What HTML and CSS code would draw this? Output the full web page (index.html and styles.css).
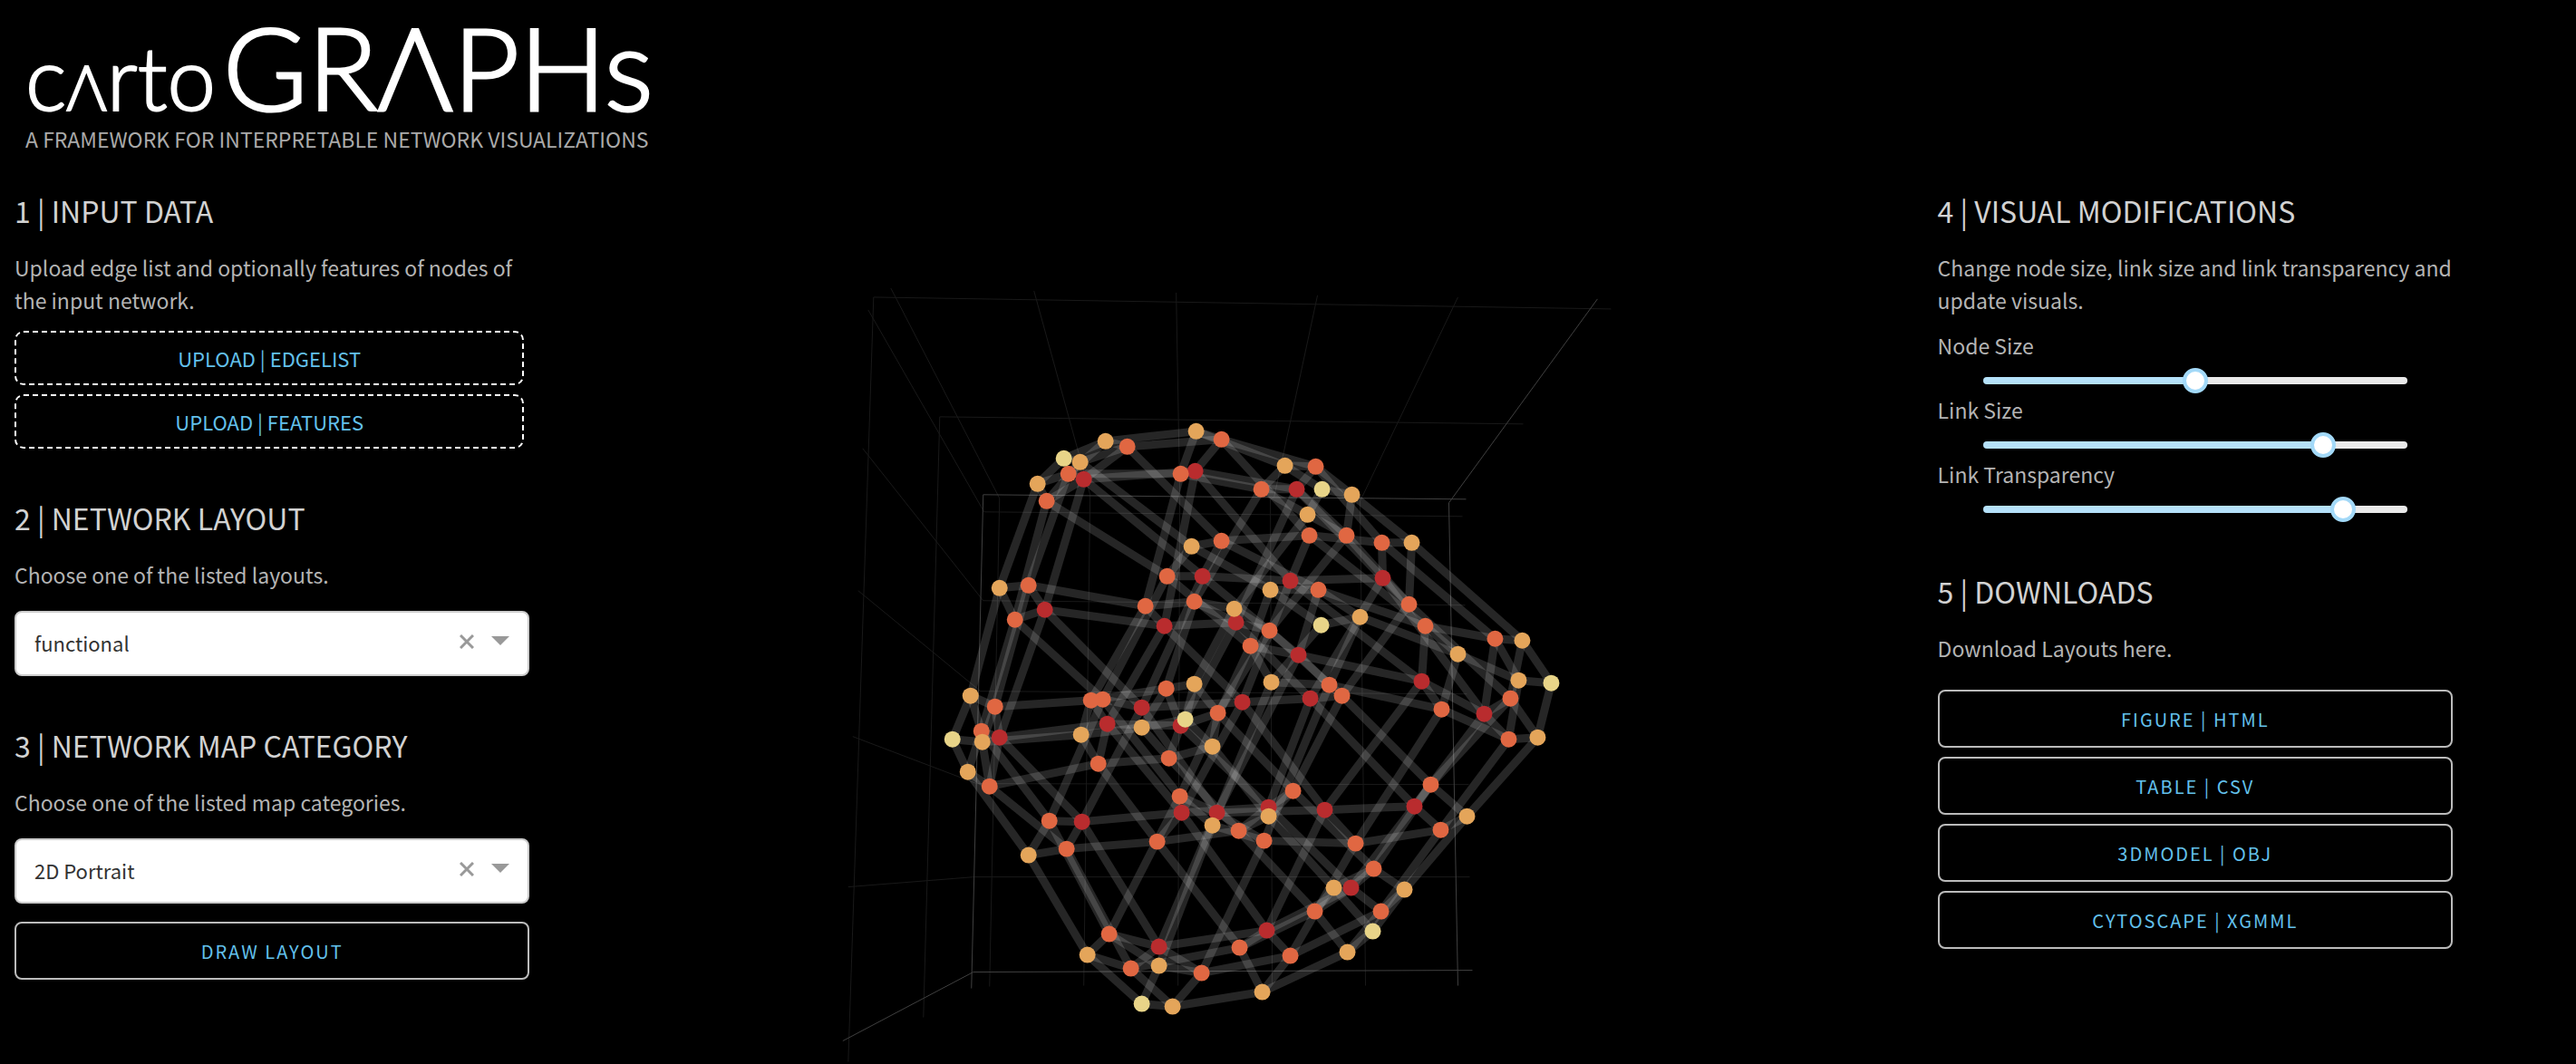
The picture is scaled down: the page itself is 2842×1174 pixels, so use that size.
FILE: index.html
```html
<!DOCTYPE html>
<html lang="en">
<head>
<meta charset="utf-8">
<title>cartoGRAPHs</title>
<link rel="stylesheet" href="styles.css">
</head>
<body>
<header class="masthead">
  <h1 class="logo"><span class="logo-small">c<span class="logo-peak">Λ</span>rto</span><span class="logo-big">GRΛPHs</span></h1>
  <p class="tagline">A FRAMEWORK FOR INTERPRETABLE NETWORK VISUALIZATIONS</p>
</header>
<main class="workspace">
  <div class="panel">
    <section class="section">
      <h2 class="title">1 | INPUT DATA</h2>
      <p class="text">Upload edge list and optionally features of nodes of the input network.</p>
      <div class="uploads">
        <button class="upload" type="button">UPLOAD | EDGELIST</button>
        <button class="upload" type="button">UPLOAD | FEATURES</button>
      </div>
    </section>
    <section class="section">
      <h2 class="title">2 | NETWORK LAYOUT</h2>
      <p class="text" id="layout-label">Choose one of the listed layouts.</p>
      <div class="dropdown">
        <select class="select" aria-labelledby="layout-label">
          <option>functional</option>
        </select>
        <button class="clear" type="button" aria-label="Clear layout"><svg class="cross" viewBox="0 0 16 16"><path d="M1 1 15 15M15 1 1 15"/></svg></button>
        <svg class="arrow" viewBox="0 0 20 10"><path d="M0 0H20L10 10Z"/></svg>
      </div>
    </section>
    <section class="section">
      <h2 class="title">3 | NETWORK MAP CATEGORY</h2>
      <p class="text" id="category-label">Choose one of the listed map categories.</p>
      <div class="dropdown">
        <select class="select" aria-labelledby="category-label">
          <option>2D Portrait</option>
        </select>
        <button class="clear" type="button" aria-label="Clear category"><svg class="cross" viewBox="0 0 16 16"><path d="M1 1 15 15M15 1 1 15"/></svg></button>
        <svg class="arrow" viewBox="0 0 20 10"><path d="M0 0H20L10 10Z"/></svg>
      </div>
      <button class="button draw" type="button">DRAW LAYOUT</button>
    </section>
  </div>

  <svg class="plot" viewBox="583 189 1554 984" role="img" aria-label="3D network">
    <g class="grid">
      <path d="M963 327 1777 340M1036 459 1680 467M982 317 1102 549 1091 1088M1140 320 1202 545 1195 1087M1297 322 1301 545 1299 1087M1453 325 1405 548 1401 550 1403 1085M1608 327 1502 548 1500 552 1506 1087"/>
      <path d="M957 341 1085 564 1613 569M951 494 1084 662 1616 667M946 651 1081 762 1618 765M940 812 1077 864 1620 865M935 978 1074 967 1621 967M963 327 935 1171M1036 459 1018 1122"/>
    </g>
    <path class="axes" d="M1071 1090 1084 545 1617 550M1762 329 1598 554 1608 1087M929 1148 1073 1072 1624 1070"/>
    <g class="links" id="links"></g>
    <g id="nodes"></g>
  </svg>

  <div class="panel">
    <section class="section">
      <h2 class="title">4 | VISUAL MODIFICATIONS</h2>
      <p class="text">Change node size, link size and link transparency and update visuals.</p>
      <div class="sliders">
        <label class="slider-label" for="node-size">Node Size</label>
        <input class="slider" id="node-size" type="range" min="0" max="100" value="50" style="--fill:50%">
        <label class="slider-label" for="link-size">Link Size</label>
        <input class="slider" id="link-size" type="range" min="0" max="100" value="82" style="--fill:82%">
        <label class="slider-label" for="link-transparency">Link Transparency</label>
        <input class="slider" id="link-transparency" type="range" min="0" max="100" value="87" style="--fill:87%">
      </div>
    </section>
    <section class="section">
      <h2 class="title">5 | DOWNLOADS</h2>
      <p class="text">Download Layouts here.</p>
      <div class="downloads">
        <button class="button" type="button">FIGURE | HTML</button>
        <button class="button" type="button">TABLE | CSV</button>
        <button class="button" type="button">3DMODEL | OBJ</button>
        <button class="button" type="button">CYTOSCAPE | XGMML</button>
      </div>
    </section>
  </div>
</main>
<script src="graph.js"></script>
</body>
</html>
```
FILE: graph.js
```js
// Projected positions of a 5 x 5 x 5 lattice: layers > rows > nodes.
const lattice = [
  [
    [[1173,505],[1219,486],[1319,475],[1417,513],[1458,539]],
    [[1191,509],[1243,492],[1347,484],[1451,514],[1491,545]],
    [[1314,602],[1347,596],[1444,590],[1524,598],[1557,598]],
    [[1401,650],[1454,650],[1572,690],[1649,704],[1679,706]],
    [[1457,689],[1500,680],[1608,721],[1675,750],[1711,753]]
  ],
  [
    [[1144,533],[1178,522],[1302,522],[1391,539],[1442,567]],
    [[1154,552],[1195,528],[1318,519],[1430,539],[1485,590]],
    [[1287,635],[1326,635],[1423,640],[1525,637],[1554,666]],
    [[1379,712],[1432,722],[1568,751],[1637,787],[1666,770]],
    [[1402,752],[1466,755],[1590,782],[1664,815],[1696,813]]
  ],
  [
    [[1102,648],[1134,645],[1263,668],[1317,663],[1361,671]],
    [[1119,683],[1152,672],[1284,690],[1363,686],[1400,695]],
    [[1216,771],[1259,780],[1370,774],[1445,770],[1480,767]],
    [[1301,878],[1342,896],[1461,893],[1560,889],[1578,865]],
    [[1337,910],[1394,927],[1495,930],[1589,915],[1618,900]]
  ],
  [
    [[1070,767],[1097,779],[1203,772],[1286,759],[1317,754]],
    [[1082,806],[1102,813],[1221,798],[1302,800],[1343,786]],
    [[1157,905],[1193,906],[1303,896],[1399,890],[1426,872]],
    [[1223,1030],[1278,1044],[1397,1026],[1490,979],[1515,958]],
    [[1278,1065],[1325,1073],[1423,1054],[1523,1005],[1549,981]]
  ],
  [
    [[1050,815],[1083,818],[1192,810],[1259,802],[1307,793]],
    [[1067,851],[1091,867],[1211,842],[1289,836],[1337,823]],
    [[1134,943],[1176,936],[1276,928],[1366,916],[1399,900]],
    [[1199,1053],[1247,1068],[1367,1045],[1450,1005],[1471,979]],
    [[1259,1107],[1293,1110],[1392,1094],[1486,1050],[1514,1027]]
  ]
];

// Node colour by degree: core, face, edge, corner.
const kinds = ["core", "face", "edge", "corner"];
const svgNs = "http://www.w3.org/2000/svg";
const links = document.getElementById("links");
const nodes = document.getElementById("nodes");

function add(parent, tag, attributes) {
  const element = document.createElementNS(svgNs, tag);
  for (const [name, value] of Object.entries(attributes)) element.setAttribute(name, value);
  parent.appendChild(element);
}

function link(from, to) {
  if (to) add(links, "line", { x1: from[0], y1: from[1], x2: to[0], y2: to[1] });
}

lattice.forEach((layer, w) => layer.forEach((row, v) => row.forEach((point, u) => {
  link(point, row[u + 1]);
  link(point, layer[v + 1]?.[u]);
  link(point, lattice[w + 1]?.[v][u]);
})));

// Inner nodes first, so that the outer shell lies over them.
kinds.forEach((kind, outer) => lattice.forEach((layer, w) => layer.forEach((row, v) => row.forEach((point, u) => {
  if ([u, v, w].filter(i => i === 0 || i === 4).length === outer) {
    add(nodes, "circle", { class: kind, cx: point[0], cy: point[1], r: 9 });
  }
}))));
```
FILE: styles.css
```css
* { box-sizing: border-box; }

body {
  margin: 0;
  background: #000;
  color: #b4b4b4;
  font-family: "Noto Sans CJK SC", "Noto Sans", sans-serif;
  font-size: 23px;
  line-height: 36px;
}

button, select { font: inherit; cursor: pointer; }

.masthead { height: 190px; padding: 9px 28px 0; }

.logo {
  display: flex;
  align-items: baseline;
  gap: 8px;
  height: 126px;
  margin: 0;
  color: #fff;
  font-family: Lato, sans-serif;
  font-weight: 300;
  line-height: 128px;
}
.logo-small { font-size: 96px; -webkit-text-stroke: 2px #fff; }
.logo-peak { font-size: 68px; }
.logo-big { font-size: 127px; -webkit-text-stroke: 3px #fff; }

.tagline { margin: 0; color: #aaa; }

.workspace {
  display: grid;
  grid-template-columns: 20vw 1fr 20vw;
  align-items: start;
  padding: 0 136px 0 16px;
}

.panel { padding-top: 18px; }
.section { margin-bottom: 52px; }

.title {
  margin: 0 0 21px;
  color: #d2d2d2;
  font-size: 32px;
  font-weight: 400;
  line-height: 48px;
}
.text { margin: 0; }

.uploads { display: grid; gap: 10px; margin: 16px 6px 0 0; }
.upload {
  height: 60px;
  padding: 0;
  border: 2px dashed #fff;
  border-radius: 10px;
  background: none;
  color: #63c1ec;
  font-size: 22px;
}

.dropdown { position: relative; margin-top: 22px; }
.select {
  display: block;
  width: 100%;
  height: 72px;
  padding: 0 110px 2px 20px;
  border: 2px solid #ccc;
  border-radius: 8px;
  background: #fff;
  color: #333;
  font-size: 22px;
  appearance: none;
}
.clear {
  position: absolute;
  top: 22px;
  right: 57px;
  display: grid;
  place-items: center;
  width: 24px;
  height: 24px;
  padding: 0;
  border: 0;
  background: none;
}
.cross { width: 16px; fill: none; stroke: #999; stroke-width: 3; }
.arrow { position: absolute; top: 28px; right: 22px; width: 20px; fill: #999; pointer-events: none; }

.button {
  display: block;
  width: 100%;
  height: 64px;
  padding: 2px 0 0;
  border: 2px solid #bbb;
  border-radius: 8px;
  background: none;
  color: #63c1ec;
  font-size: 20px;
  letter-spacing: 2px;
}
.draw { margin-top: 20px; }
.downloads { display: grid; gap: 10px; margin-top: 28px; }

.sliders { display: grid; margin-top: 14px; }
.slider-label { display: block; margin-bottom: 7px; }
.slider {
  width: auto;
  height: 28px;
  margin: 0 36px;
  background: none;
  appearance: none;
}
.slider::-webkit-slider-runnable-track {
  height: 8px;
  margin: 0 14px;
  border-radius: 4px;
  background: linear-gradient(to right, #b5e1f9 var(--fill), #e9e9e9 var(--fill));
}
.slider::-webkit-slider-thumb {
  width: 28px;
  height: 28px;
  margin-top: -10px;
  border: 4px solid #a3d9f8;
  border-radius: 50%;
  background: #fff;
  appearance: none;
}

.plot { display: block; width: 100%; }
.grid { fill: none; stroke: #191919; stroke-width: 1; }
.axes { fill: none; stroke: #404040; stroke-width: 1; }
.links { stroke: #fff; stroke-opacity: .15; stroke-width: 9; }
.core { fill: #b92c2e; }
.face { fill: #e06742; }
.edge { fill: #e4a55a; }
.corner { fill: #e8d488; }
```
